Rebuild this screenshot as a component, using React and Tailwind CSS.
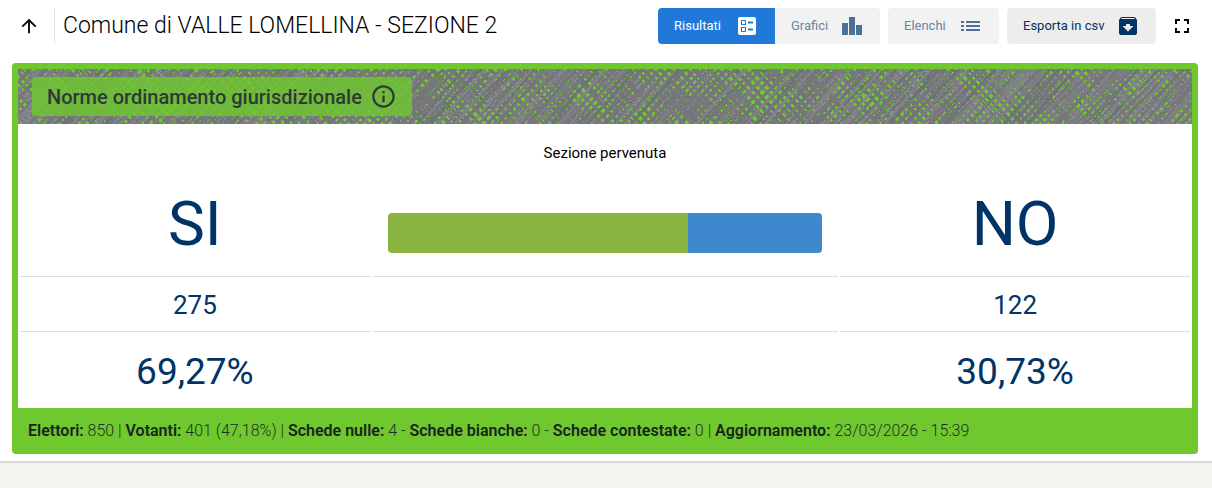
import React from 'react';
import { MdArchive, MdArrowUpward, MdBallot, MdFullscreen, MdInfoOutline } from 'react-icons/md';

const results = [
  { label: 'SI', votes: '275', percent: '69,27%', value: 69 },
  { label: 'NO', votes: '122', percent: '30,73%', value: 31 },
];

const summary = [
  { label: 'Elettori:', value: '850', separator: ' | ' },
  { label: 'Votanti:', value: '401 (47,18%)', separator: ' | ' },
  { label: 'Schede nulle:', value: '4', separator: ' - ' },
  { label: 'Schede bianche:', value: '0', separator: ' - ' },
  { label: 'Schede contestate:', value: '0', separator: ' | ' },
  { label: 'Aggiornamento:', value: '23/03/2026 - 15:39', separator: '' },
];

// Pencil-like strokes running both ways, with a fixed seed so they never move.
// Each direction is drawn twice with a loose pitch, which opens and closes the weave.
function buildStrokes() {
  let seed = 7;
  const random = () => {
    seed = (seed * 16807) % 2147483647;
    return seed / 2147483647;
  };
  const shades = ['#747678', '#7b7d81', '#6e7476', '#808288', '#77777b', '#75787a'];
  const layers = [
    { dir: 1, lean: 54, pitch: 8.2 },
    { dir: 1, lean: 46, pitch: 8.8 },
    { dir: -1, lean: 54, pitch: 8.6 },
    { dir: -1, lean: 46, pitch: 8 },
  ];
  const strokes = [];
  layers.forEach(({ dir, lean, pitch }) => {
    for (let x = -80; x < 2600; x += pitch + (random() - 0.5) * 4) {
      const tilt = (dir * (lean + random() * 4)) / 2;
      strokes.push({
        x1: x - tilt,
        x2: x + tilt,
        color: shades[Math.floor(random() * shades.length)],
        width: 1.9 + random() * 1.2,
      });
    }
  });
  // broken highlights on top of the weave
  for (let x = -60; x < 2600; x += 5 + random() * 9) {
    const tilt = random() > 0.5 ? 25 : -25;
    strokes.push({ x1: x - tilt, x2: x + tilt, color: '#92959b', width: 0.5, dash: '2 5' });
  }
  return strokes;
}

const strokes = buildStrokes();

export default function App() {
  return (
    <div className="min-h-screen bg-[#f4f4ee] font-['Roboto',sans-serif] text-black">
      <main className="border-b-2 border-[#d8d8d6] bg-white pr-3.5 pb-[7px] pl-3">
        <Toolbar />
        <section className="overflow-hidden rounded border-6 border-[#6fc82e] bg-white">
          <Banner title="Norme ordinamento giurisdizionale" />
          <p className="pt-[17px] text-center text-[15px] leading-6">Sezione pervenuta</p>
          <Results />
          <Summary />
        </section>
      </main>
    </div>
  );
}

function Toolbar() {
  return (
    <header className="flex items-center justify-between pt-2 pr-1 pb-[19px]">
      <div className="flex items-center">
        <button aria-label="Torna indietro" className="flex w-[42px] items-center pl-1.5">
          <MdArrowUpward className="size-[22px]" />
        </button>
        <h1 className="border-l border-[#dedede] pl-2 text-[23px] leading-[34px] font-light">
          Comune di VALLE LOMELLINA - SEZIONE 2
        </h1>
      </div>
      <div className="flex items-center gap-2 text-[13px]">
        <div className="flex">
          <ToolButton
            text="Risultati"
            icon={<MdBallot className="size-6" />}
            className="w-[117px] rounded-l bg-[#2079d8] text-white"
          />
          <ToolButton
            text="Grafici"
            icon={<BarsIcon />}
            className="w-[105px] rounded-r bg-[#f2f2f2] text-[#6785a5]"
          />
        </div>
        <ToolButton
          text="Elenchi"
          icon={<ListIcon />}
          className="w-[111px] rounded bg-[#f2f2f2] text-[#6785a5]"
        />
        <ToolButton
          text="Esporta in csv"
          icon={<MdArchive className="size-6" />}
          className="w-[149px] rounded bg-[#ededed] text-[#003366]"
        />
        <button aria-label="Schermo intero" className="ml-1.5 flex size-6 items-center justify-center">
          <MdFullscreen className="size-6" />
        </button>
      </div>
    </header>
  );
}

function ToolButton({ text, icon, className }) {
  return (
    <button className={`flex h-9 items-center justify-between px-4 whitespace-nowrap ${className}`}>
      {text}
      {icon}
    </button>
  );
}

function BarsIcon() {
  return (
    <svg viewBox="0 0 22 18" className="h-[18px] w-[22px]" fill="#4c7197" aria-hidden="true">
      <path d="M0 6h6v12H0zM7 0h6v18H7zM14 8h6v10h-6z" />
    </svg>
  );
}

function ListIcon() {
  return (
    <svg viewBox="0 0 22 18" className="h-[18px] w-[22px]" fill="#4c7197" aria-hidden="true">
      <path d="M0 4h3v2H0zM0 8h3v2H0zM0 12h3v2H0zM5 4h14v2H5zM5 8h14v2H5zM5 12h14v2H5z" />
    </svg>
  );
}

function Banner({ title }) {
  return (
    <div className="relative bg-[#6fc82e] px-3.5 py-2">
      <svg className="absolute inset-0 h-full w-full" aria-hidden="true" shapeRendering="crispEdges">
        {strokes.map((s, i) => (
          <line
            key={i}
            x1={s.x1}
            y1="0"
            x2={s.x2}
            y2="55"
            stroke={s.color}
            strokeWidth={s.width}
            strokeDasharray={s.dash}
          />
        ))}
      </svg>
      <div className="relative inline-flex h-[39px] items-center gap-2 rounded bg-[#6fc82e]/80 px-[15px] align-top text-xl font-medium text-[#2d3a35]">
        <h2>{title}</h2>
        <button aria-label="Informazioni">
          <MdInfoOutline className="size-[27px]" />
        </button>
      </div>
    </div>
  );
}

function Results() {
  const [yes, no] = results;

  return (
    <table className="w-full table-fixed border-separate border-spacing-0.5 text-center text-[#003366]">
      <colgroup>
        <col className="w-[30%]" />
        <col className="w-[40%]" />
        <col className="w-[30%]" />
      </colgroup>
      <thead>
        <tr className="h-[110px]">
          <ResultHead>{yes.label}</ResultHead>
          <td className="border-b border-[#dedede] px-4 pt-[22px]">
            <div className="flex h-10 overflow-hidden rounded">
              <div className="bg-[#8ab441]" style={{ width: `${yes.value}%` }} />
              <div className="flex-1 bg-[#3f88cd]" />
            </div>
          </td>
          <ResultHead>{no.label}</ResultHead>
        </tr>
      </thead>
      <tbody>
        <tr className="h-[53px] text-[26px]">
          <td className="border-b border-[#dedede]">{yes.votes}</td>
          <td className="border-b border-[#dedede]" />
          <td className="border-b border-[#dedede]">{no.votes}</td>
        </tr>
        <tr className="h-[72px] text-[37px]">
          <td className="pt-1">{yes.percent}</td>
          <td />
          <td className="pt-1">{no.percent}</td>
        </tr>
      </tbody>
    </table>
  );
}

function ResultHead({ children }) {
  return (
    <th scope="col" className="border-b border-[#dedede] pt-1 text-[62px] leading-none font-normal">
      {children}
    </th>
  );
}

function Summary() {
  return (
    <p className="bg-[#6fc82e] px-2.5 pt-[11px] pb-[5px] text-base leading-6 font-light text-[#1d3025]">
      {summary.map((item) => (
        <React.Fragment key={item.label}>
          <b className="font-semibold text-[#18251f]">{item.label}</b> {item.value}
          {item.separator}
        </React.Fragment>
      ))}
    </p>
  );
}
